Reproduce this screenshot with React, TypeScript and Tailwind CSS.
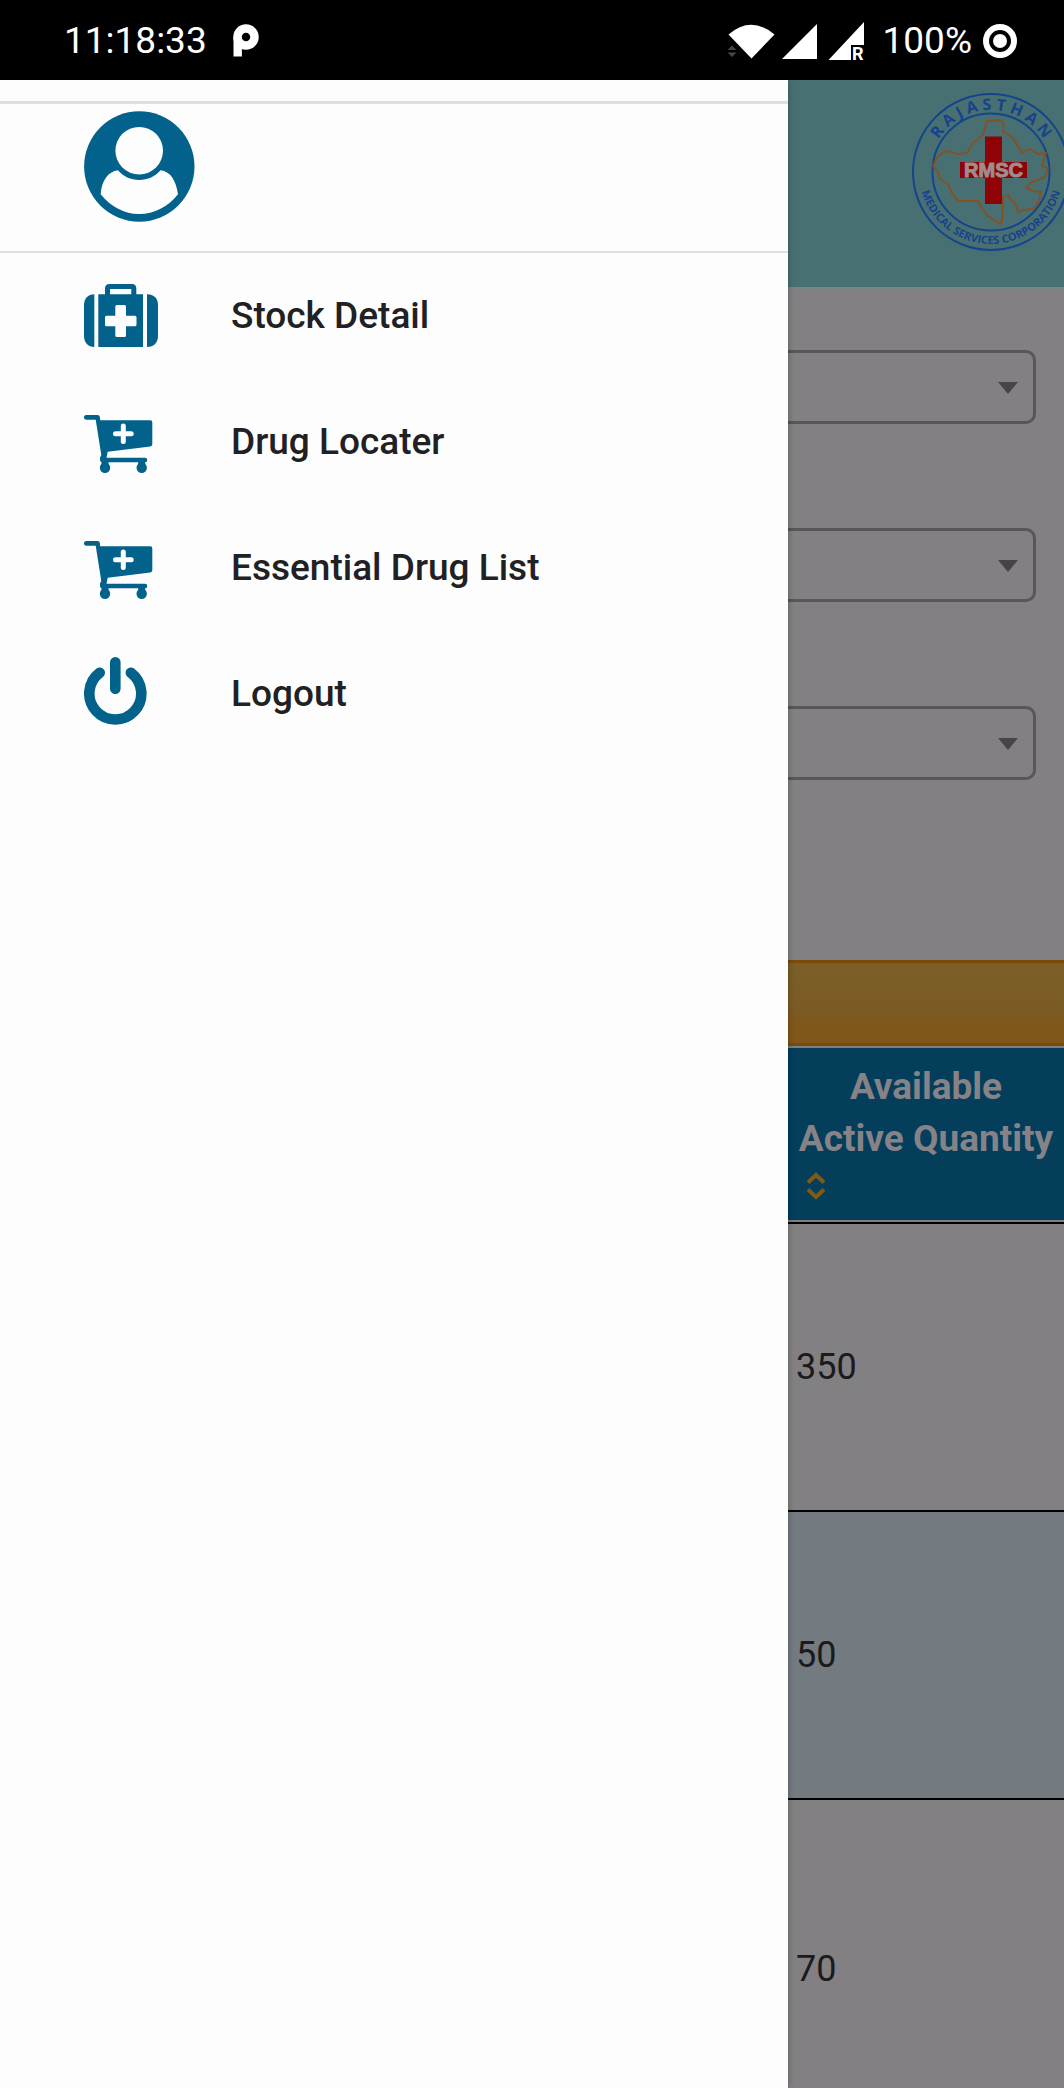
import React from "react";

const BLUE = "#02628c";

function Briefcase() {
  return (
    <svg viewBox="0 0 76 76" className="size-[76px]" fill={BLUE} aria-hidden="true">
      <path d="M10.300 16.300V69C4 69 0 64.500 0 58V27C0 20.500 4 16.300 10.300 16.300Z" />
      <path d="M63 16.300V69C70 69 74 64.500 74 58V27C74 20.500 70 16.300 63 16.300Z" />
      <path
        fillRule="evenodd"
        d="M14.300 16.300H21V10.500Q21 6 25.500 6H48Q52.300 6 52.300 10.500V16.300H59V69H14.300ZM26 11V16.300H47.300V11ZM32.800 27Q31.300 27 31.300 28.500V37.700H22.500Q21 37.700 21 39.200V46.800Q21 48.300 22.500 48.300H31.300V57.500Q31.300 59 32.800 59H40.500Q42 59 42 57.500V48.300H51Q52.500 48.300 52.500 46.800V39.200Q52.500 37.700 51 37.700H42V28.500Q42 27 40.500 27Z"
      />
    </svg>
  );
}

function Cart() {
  return (
    <svg viewBox="0 0 76 76" className="size-[76px]" fill={BLUE} aria-hidden="true">
      <path d="M2.300 11H13.500Q15.700 11 15.900 13.200L16.200 16.300H66.300Q68.300 16.300 68.300 18.300V40.300Q68.300 42.300 66.300 42.600L23.700 47.700L22.500 53.700H61Q63.300 53.700 63.300 56T61 58.300H18.300Q16 58.300 16 56V53.500L17.300 51L11.700 15.700H2.300A2.350 2.350 0 0 1 2.300 11Z" />
      <path d="M17.500 57.500h7v4h-7zM54.200 57.500h7v4h-7z" />
      <circle cx="21" cy="63.800" r="5.200" />
      <circle cx="57.700" cy="63.800" r="5.200" />
      <path d="M39.300 22V37.500M31.500 29.700H47.200" stroke="#fdfdfd" strokeWidth="5" strokeLinecap="round" />
    </svg>
  );
}

function Power() {
  return (
    <svg
      viewBox="0 0 76 76"
      className="size-[76px]"
      fill="none"
      stroke={BLUE}
      strokeWidth="10.600"
      strokeLinecap="round"
      aria-hidden="true"
    >
      <path d="M31.300 6.300V32.700M15.700 16.700A26 26 0 1 0 46.900 16.700" />
    </svg>
  );
}

function Avatar() {
  return (
    <svg viewBox="0 0 111 111" className="size-[111px]" role="img" aria-label="User profile">
      <circle cx="55.300" cy="55.500" r="55.200" fill={BLUE} />
      <circle cx="55.200" cy="39.700" r="23.800" fill="#fdfdfd" />
      <path
        d="M34 59.300C24 60.500 17.500 70 16.700 83.300C27 96 40 103 55.200 103S84 96 94 83.300C92 70 87 60.500 76.500 59.300C71 65.500 64 69 55.200 69S39.500 65.500 34 59.300Z"
        fill="#fdfdfd"
      />
    </svg>
  );
}

function StatusBar() {
  return (
    <header className="flex h-20 shrink-0 items-center justify-between bg-black pt-px pr-[47px] pl-16 text-[37px] leading-none text-white">
      <div className="flex items-center gap-[26px]">
        <time>11:18:33</time>
        <svg viewBox="0 0 26 34" className="h-[34px] w-[26px]" aria-hidden="true">
          <circle cx="13" cy="13" r="8.500" fill="none" stroke="#fff" strokeWidth="8.500" />
          <path d="M.5 13H8.900V32.500H.5Z" fill="#fff" />
        </svg>
      </div>
      <div className="flex items-center">
        <svg viewBox="0 0 138 40" className="mr-[18px] h-10 w-[138px] overflow-visible" fill="#fff" aria-hidden="true">
          <path d="M1.500 13.500Q24 -6 47.500 13.500L24.500 37.500Z" />
          <path d="M.5 29 5 24.500 9.500 29ZM.5 31.500H9.500L5 36Z" fill="#444" />
          <path d="M90 3V38H55Z" />
          <path d="M137 1V24H124V39H101.500Z" />
          <text x="125" y="38.500" fontFamily="Roboto" fontWeight="700" fontSize="18">R</text>
        </svg>
        <span className="mr-[11px]">100%</span>
        <svg viewBox="0 0 34 34" className="size-[34px]" aria-hidden="true">
          <circle cx="17" cy="17" r="14" fill="none" stroke="#fff" strokeWidth="6" />
          <circle cx="17" cy="17" r="7" fill="#fff" />
        </svg>
      </div>
    </header>
  );
}

function Logo() {
  return (
    <svg viewBox="0 0 158 158" className="size-[158px] shrink-0 overflow-visible" role="img" aria-label="Rajasthan Medical Services Corporation">
      <defs>
        <path id="arc-top" d="M17 79A62 62 0 0 1 141 79" />
        <path id="arc-bottom" d="M7 79A72 72 0 0 0 151 79" />
      </defs>
      <g fill="none" stroke="#14458c" strokeWidth="2">
        <circle cx="79" cy="79" r="78" />
        <circle cx="79" cy="79" r="58.500" />
      </g>
      <g fill="#17438a" fontFamily="Open Sans, sans-serif" textAnchor="middle">
        <text fontSize="16" fontWeight="700">
          <textPath href="#arc-top" startOffset="50%">R A J A S T H A N</textPath>
        </text>
        <text fontSize="11" fontWeight="700">
          <textPath href="#arc-bottom" startOffset="50%">MEDICAL SERVICES CORPORATION</textPath>
        </text>
      </g>
      <path
        d="M75 28L87 27L92 31L91 38L101 45L107 55L110 60L118 56L126 61L134 60L132 66L130 73L136 75L133 84L118 90L115 95L120 98L129 99L127 108L123 115L112 117L106 119L103 110L100 108L96 102L91 104L90 128L88 131L76 123L71 117L66 108L46 108L41 102L36 91L28 86L26 79L21 73L26 63L34 58L46 61L55 60L61 50L71 42Z"
        fill="none"
        stroke="#87501d"
        strokeWidth="1.800"
      />
      <path d="M73 43.500H90V69H115V85H90V111H73V85H48V69H73Z" fill="#8f0206" />
      <text
        x="81.500"
        y="84"
        textAnchor="middle"
        fill="#a18b8b"
        stroke="#a18b8b"
        strokeWidth="1"
        fontFamily="Liberation Sans"
        fontWeight="700"
        fontSize="20"
      >
        RMSC
      </text>
    </svg>
  );
}

function SelectField({ label }: { label: string }) {
  return (
    <div className="relative">
      <select
        aria-label={label}
        className="block h-[74px] w-full appearance-none rounded-r-[10px] border-[3px] border-l-0 border-[#585659] bg-transparent px-4 text-[36px] text-[#1b1a1c]"
      >
        <option value="" />
      </select>
      <span className="pointer-events-none absolute top-8 right-[18px] border-x-[10px] border-t-[12px] border-x-transparent border-t-[#464447]" />
    </div>
  );
}

const menu = [
  { label: "Stock Detail", Icon: Briefcase },
  { label: "Drug Locater", Icon: Cart },
  { label: "Essential Drug List", Icon: Cart },
  { label: "Logout", Icon: Power },
];

function Drawer() {
  return (
    <aside className="relative z-10 bg-[#fdfdfd] pt-[21px] shadow-[0_0_6px_rgba(0,0,0,0.3)]">
      <div className="border-t-[3px] border-b-2 border-[#dfdfdf] pt-[7px] pb-[29px] pl-[84px]">
        <Avatar />
      </div>
      <nav aria-label="Main menu">
        <ul>
          {menu.map(({ label, Icon }) => (
            <li key={label}>
              <a href="#" className="flex h-[126px] items-center gap-[71px] pl-[84px] text-[37px] font-medium text-[#212023]">
                <Icon />
                {label}
              </a>
            </li>
          ))}
        </ul>
      </nav>
    </aside>
  );
}

function Page() {
  return (
    <main className="min-w-0 overflow-hidden bg-[#828082] text-[36px]">
      <div className="flex h-[209px] items-start overflow-hidden border-b-2 border-[#7b8586] bg-[#487072] pt-[13px] pl-[124px]">
        <Logo />
      </div>
      <form className="flex flex-col gap-[104px] pt-[61px] pr-7 pb-[180px]">
        <SelectField label="Drug category" />
        <SelectField label="Drug name" />
        <SelectField label="Warehouse" />
      </form>
      <div className="h-[86px] border-y-[3px] border-[#7a4a08] bg-linear-to-b from-[#7b5e28] from-0% via-[#7b5b24] via-60% to-[#80571a] to-75%" />
      <table className="w-full border-separate border-spacing-0 text-left text-[#1b1a1c]">
        <thead>
          <tr>
            <th scope="col" className="h-[176px] border-y-2 border-[#7d8182] bg-[#043e5b] p-0 align-top font-bold text-[#858387]">
              <div className="pt-[13px] text-center text-[37px] leading-[52px]">
                Available
                <br />
                Active Quantity
              </div>
              <button type="button" aria-label="Sort by available active quantity" className="ml-[18px] block pt-[7px]">
                <svg viewBox="0 0 20 28" className="h-7 w-5" fill="none" stroke="#805b13" strokeWidth="4" aria-hidden="true">
                  <path d="M2 10.500L10 3L18 10.500M2 17.500L10 25L18 17.500" />
                </svg>
              </button>
            </th>
          </tr>
        </thead>
        <tbody>
          <tr>
            <td className="h-72 border-t-2 border-black px-2 py-0">350</td>
          </tr>
          <tr>
            <td className="h-72 border-t-2 border-black bg-[#737a80] px-2 py-0">50</td>
          </tr>
          <tr>
            <td className="h-[340px] border-t-2 border-black px-2 py-0">70</td>
          </tr>
        </tbody>
      </table>
    </main>
  );
}

export default function App() {
  return (
    <div className="flex h-screen flex-col overflow-hidden font-[Roboto,sans-serif]">
      <StatusBar />
      <div className="grid min-h-0 flex-1 grid-cols-[197fr_69fr]">
        <Drawer />
        <Page />
      </div>
    </div>
  );
}
